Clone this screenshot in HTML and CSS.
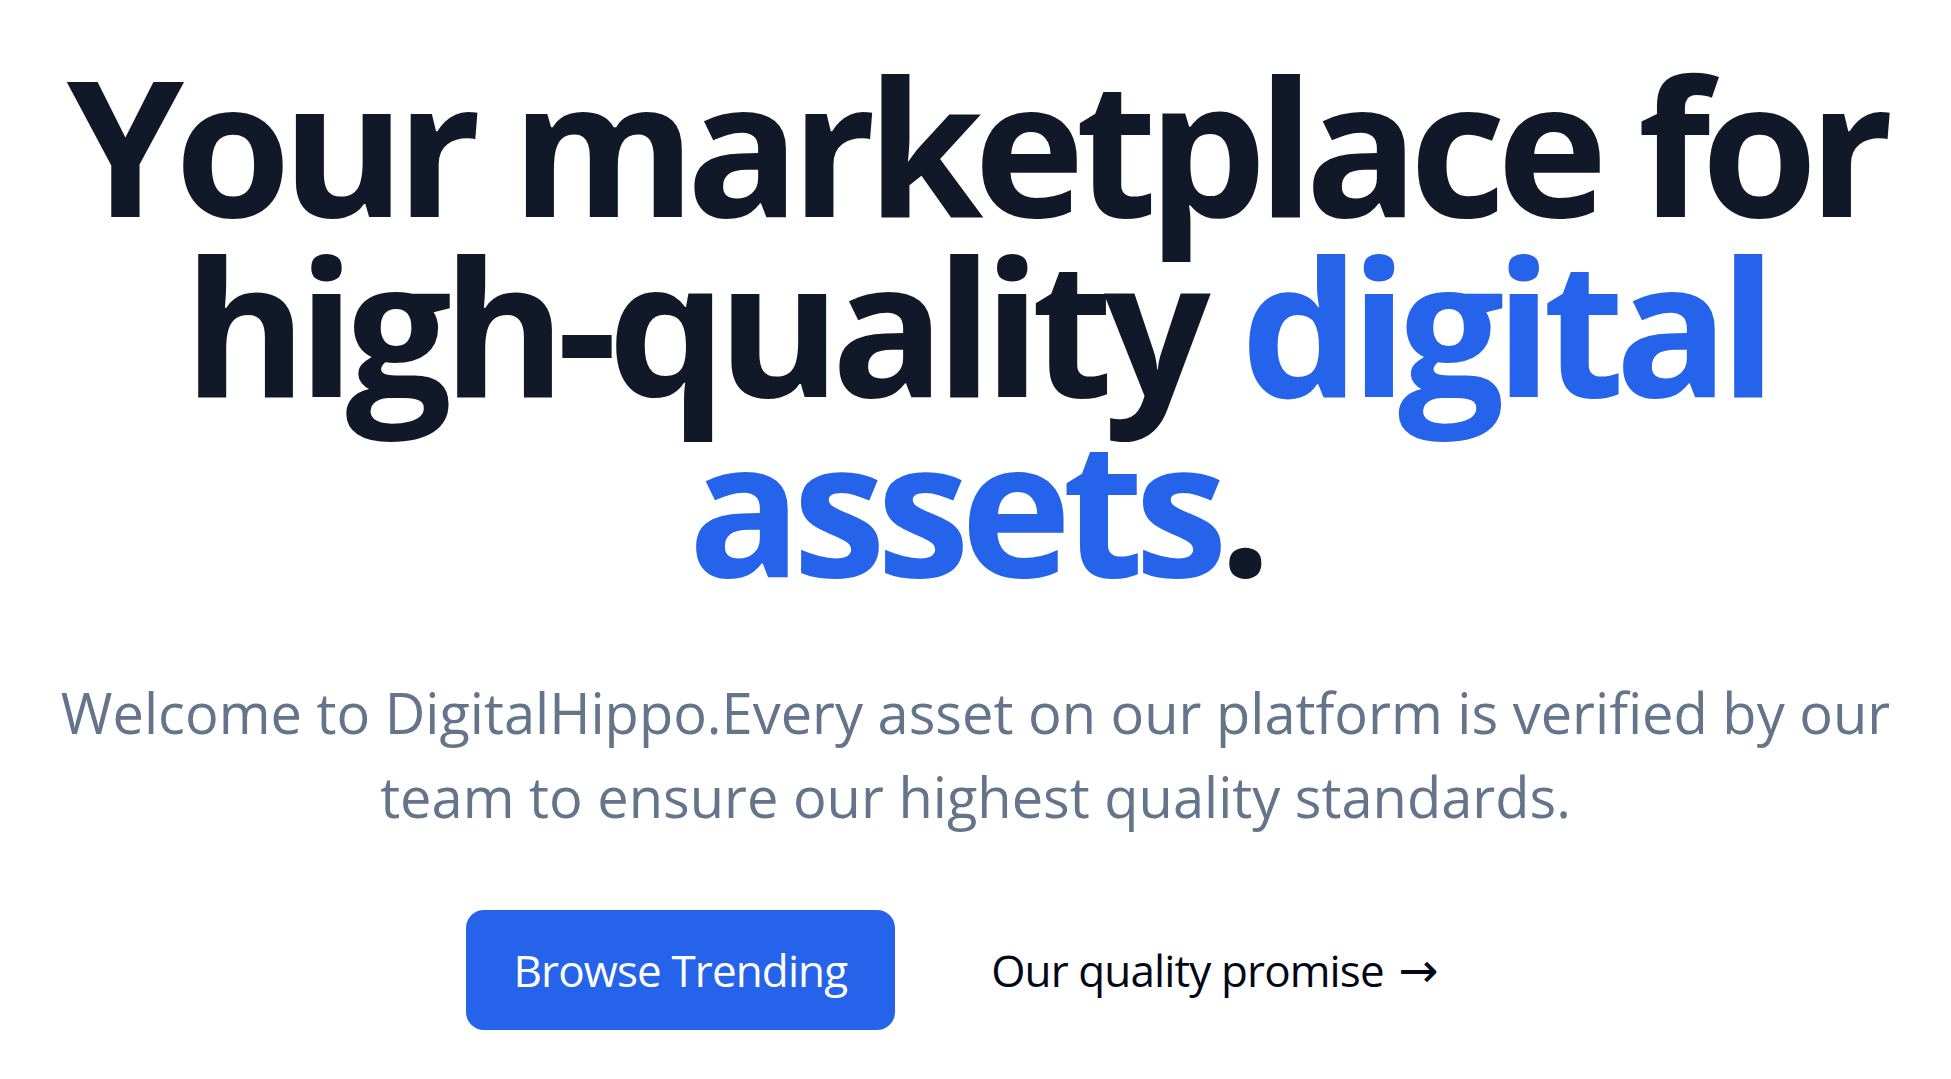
FILE: index.html
```html
<!DOCTYPE html>
<html lang="en">
<head>
<meta charset="utf-8">
<title>DigitalHippo</title>
<link rel="stylesheet" href="styles.css">
</head>
<body>
<main class="wrapper">
  <section class="hero">
    <h1 class="title">Your marketplace for high-quality <span class="accent">digital assets</span>.</h1>
    <p class="lead">Welcome to DigitalHippo.Every asset on our platform is verified by our team to ensure our highest quality standards.</p>
    <div class="actions">
      <a class="btn btn-primary" href="#">Browse Trending</a>
      <a class="btn btn-ghost" href="#">Our quality promise <span class="arrow">&rarr;</span></a>
    </div>
  </section>
</main>
</body>
</html>
```

FILE: styles.css
```css
html, body {
  margin: 0;
  padding: 0;
  background: #ffffff;
}
body {
  font-family: "Open Sans", "Noto Sans", "Liberation Sans", sans-serif;
  color: #020817;
}
.wrapper {
  width: 100%;
  box-sizing: border-box;
  padding: 0 30px;
}
.hero {
  display: flex;
  flex-direction: column;
  align-items: center;
  text-align: center;
  padding-top: 54px;
}
.title {
  margin: 0;
  font-size: 188px;
  line-height: 180px;
  font-weight: 700;
  letter-spacing: -0.05em;
  color: #111827;
}
.accent {
  color: #2563eb;
}
.lead {
  margin: 76px 0 0;
  font-size: 56px;
  line-height: 84px;
  color: #64748b;
}
.actions {
  display: flex;
  gap: 48px;
  margin-top: 72px;
}
.btn {
  display: inline-flex;
  align-items: center;
  justify-content: center;
  height: 120px;
  padding: 0 48px;
  border-radius: 18px;
  font-size: 44px;
  letter-spacing: -0.02em;
  text-decoration: none;
  box-sizing: border-box;
}
.btn-primary {
  background: #2563eb;
  color: #ffffff;
}
.btn-ghost {
  color: #020817;
}
.arrow {
  font-family: "DejaVu Sans", sans-serif;
  font-size: 48px;
  margin-left: 0.3em;
}
```
